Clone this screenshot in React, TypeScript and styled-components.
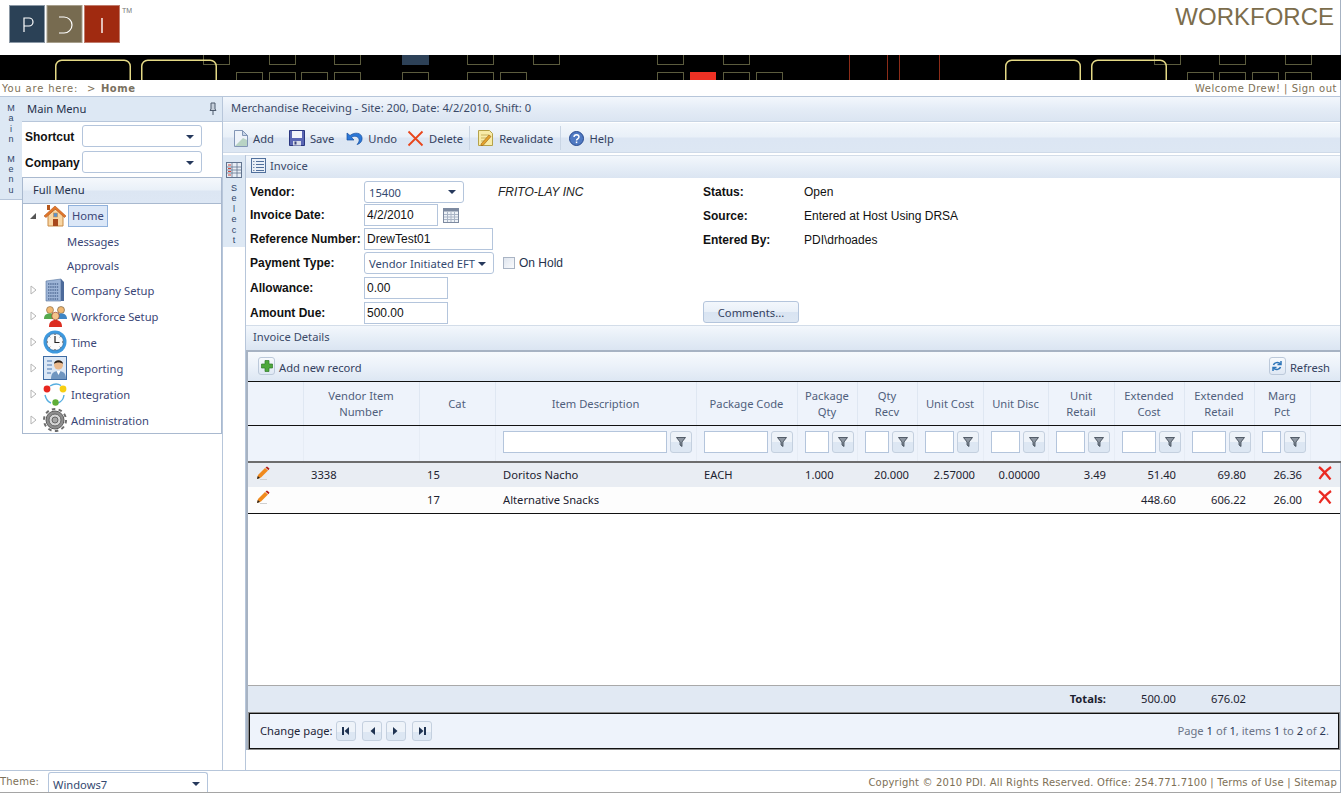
import React from "react";
import styled, { createGlobalStyle } from "styled-components";

const SEGOE = `"Noto Sans", "Liberation Sans", sans-serif`;
const ARIAL = `"Liberation Sans", Arial, sans-serif`;
const VERDANA = `"DejaVu Sans", Verdana, sans-serif`;
const LINE = "#b7c6da";

const GlobalStyle = createGlobalStyle`
  html, body { margin: 0; padding: 0; background: #fff; overflow: hidden; }
  body { font-family: ${SEGOE}; font-size: 11.2px; color: #2c3650; }
  * { box-sizing: border-box; }
`;

const Page = styled.div`
  width: 1341px;
  height: 793px;
  display: flex;
  flex-direction: column;
  border-right: 1px solid #a6b2c2;
  border-bottom: 1px solid #a5a5a5;
`;

/* ---------- header ---------- */
const TopBar = styled.header`
  height: 55px;
  display: flex;
  justify-content: space-between;
  padding: 5px 6px 0 9px;
`;
const LogoWrap = styled.div`
  display: flex;
  align-items: flex-start;
`;
const TradeMark = styled.span`
  font: 7px/10px ${ARIAL};
  color: #777;
  margin: 1px 0 0 2px;
`;
const Brand = styled.div`
  font: 24px/26px ${ARIAL};
  color: #7c6d4c;
  margin-top: -1px;
`;
const BannerSvg = styled.svg`
  display: block;
  flex: none;
`;
const Crumbs = styled.div`
  height: 16px;
  display: flex;
  justify-content: space-between;
  padding: 0 3px 0 2px;
  font: 10px/17px ${VERDANA};
  color: #7d7056;
  letter-spacing: 0.5px;
`;
const CrumbLead = styled.span`
  letter-spacing: 0.8px;
`;
const CrumbArrow = styled.span`
  margin-left: 9px;
`;
const CrumbHome = styled.b`
  color: #7a7160;
  margin-left: 5px;
`;

/* ---------- body columns ---------- */
const Main = styled.div`
  flex: 1;
  min-height: 0;
  display: flex;
  border-top: 1px solid ${LINE};
`;
const SideTab = styled.div`
  width: 22px;
  height: 103px;
  background: #dde8f4;
  padding-top: 6px;
  border-bottom: 1px solid ${LINE};
`;
const Stacked = styled.div`
  display: flex;
  flex-direction: column;
  align-items: center;
  font: 9px/10.4px ${ARIAL};
  color: #2f4468;
`;
const Gap = styled.span`
  height: 9px;
`;
const MenuColumn = styled.aside`
  width: 201px;
  border-right: 1px solid ${LINE};
  display: flex;
  flex-direction: column;
`;
const MenuHead = styled.div`
  height: 25px;
  background: #dde8f4;
  border-bottom: 1px solid ${LINE};
  display: flex;
  align-items: center;
  justify-content: space-between;
  padding: 0 4px 1px 5px;
  color: #26324c;
`;
const PickRow = styled.div<{ $top: number }>`
  display: flex;
  align-items: center;
  height: 22px;
  margin-top: ${(p) => p.$top}px;
`;
const PickLabel = styled.label`
  width: 60px;
  padding: 2px 0 0 3px;
  font: bold 12px ${ARIAL};
  color: #111;
`;
const Combo = styled.div<{ $w: number; $h?: number }>`
  width: ${(p) => p.$w}px;
  height: ${(p) => p.$h ?? 22}px;
  border: 1px solid #b4c5dc;
  border-radius: 3px;
  background: #fff;
  display: flex;
  align-items: center;
  justify-content: space-between;
  padding: 1px 7px 0 4px;
  color: #33496f;
  white-space: nowrap;
`;
const Caret = styled.i`
  width: 0;
  height: 0;
  flex: none;
  border: 4px solid transparent;
  border-top: 4px solid #26395c;
  border-bottom: 0;
`;
const FullMenu = styled.div`
  margin-top: 4px;
  height: 27px;
  border: 1px solid #a9b9cf;
  background: linear-gradient(#f5f8fc, #e9f0f8 48%, #dce6f3 52%, #dde7f4);
  padding-left: 10px;
  line-height: 23px;
  color: #26324c;
`;
const Tree = styled.ul`
  list-style: none;
  margin: 0;
  padding: 0;
  height: 230px;
  border: 1px solid #a9b9cf;
  border-top: 0;
`;
const TreeRow = styled.li<{ $h?: number }>`
  height: ${(p) => p.$h ?? 26}px;
  padding-bottom: 2px;
  display: flex;
  align-items: center;
  color: #3a4676;
`;
const Expander = styled.span`
  width: 20px;
  display: flex;
  justify-content: center;
`;
const TreeIcon = styled.span`
  width: 24px;
  height: 24px;
  margin-right: 4px;
  flex: none;
`;
const Selected = styled.span`
  background: #dbe7f7;
  border: 1px solid #8fb1dc;
  height: 22px;
  padding: 0 3px;
  margin-left: -3px;
  line-height: 19px;
`;
const SubItem = styled.span`
  padding-left: 44px;
`;

const RightPane = styled.main`
  flex: 1;
  min-width: 0;
  display: flex;
  flex-direction: column;
`;
const TitleBar = styled.div`
  height: 25px;
  padding-left: 8px;
  line-height: 22px;
  background: linear-gradient(#f3f7fc, #e4ecf6 50%, #dbe5f2);
  border-bottom: 1px solid #c9d5e4;
  color: #3b4a68;
`;
const Toolbar = styled.div`
  height: 30px;
  margin-top: 1px;
  display: flex;
  align-items: center;
  padding: 1px 0 0 10px;
  background: linear-gradient(#f3f7fc, #e9f0f8 48%, #dce6f3 52%, #dde7f3);
  border-bottom: 1px solid #cfdae8;
`;
const ToolBtn = styled.span<{ $left: number }>`
  display: inline-flex;
  align-items: center;
  gap: 5px;
  margin-left: ${(p) => p.$left}px;
  color: #35425f;
`;
const ToolSep = styled.i<{ $left: number }>`
  width: 1px;
  height: 24px;
  background: #c9d5e4;
  margin-left: ${(p) => p.$left}px;
`;
const Split = styled.div`
  flex: 1;
  min-height: 0;
  display: flex;
  margin-top: 2px;
`;
const SelectCol = styled.div`
  width: 23px;
  flex: none;
  border-right: 1px solid ${LINE};
`;
const SelectTab = styled.div`
  height: 92px;
  background: #dde8f4;
  padding-top: 7px;
  display: flex;
  flex-direction: column;
  align-items: center;
  gap: 5px;
`;
const Content = styled.section`
  flex: 1;
  min-width: 0;
  display: flex;
  flex-direction: column;
  padding-bottom: 20px;
`;
const SectionBar = styled.div<{ $h: number }>`
  height: ${(p) => p.$h}px;
  flex: none;
  display: flex;
  align-items: center;
  gap: 4px;
  padding: 0 0 4px 5px;
  background: linear-gradient(#f3f7fc, #e6eef7 50%, #dbe5f2);
  border-top: 1px solid #d3dde9;
  color: #3b4a68;
`;
const DetailsTitle = styled.span`
  padding-left: 2px;
`;

/* ---------- invoice form ---------- */
const FormArea = styled.div`
  flex: none;
  height: 147px;
  display: flex;
  padding: 2px 0 0 4px;
`;
const FormLeft = styled.div`
  width: 453px;
  display: flex;
  flex-direction: column;
`;
const FormRow = styled.div<{ $h?: number }>`
  height: ${(p) => p.$h ?? 24}px;
  display: flex;
  align-items: center;
`;
const FieldLabel = styled.span`
  width: 114px;
  flex: none;
  font: bold 12px ${ARIAL};
  color: #111;
`;
const TextField = styled.input<{ $w: number }>`
  width: ${(p) => p.$w}px;
  height: 22px;
  border: 1px solid #b4c5dc;
  padding: 0 2px;
  background: #fff;
  font: 12px ${ARIAL};
  color: #111;
  outline: none;
`;
const CalendarWrap = styled.span`
  display: flex;
  margin-left: 5px;
`;
const VendorName = styled.em`
  margin-left: 34px;
  font: italic 12px ${ARIAL};
  color: #222;
`;
const CheckBox = styled.i`
  width: 12px;
  height: 12px;
  margin: 0 4px 0 9px;
  border: 1px solid #a9b4c4;
  background: linear-gradient(135deg, #dfe5ee, #fafbfd);
`;
const CheckText = styled.span`
  font: 12px ${ARIAL};
  color: #26324c;
`;
const FormRight = styled.div`
  display: flex;
  flex-direction: column;
`;
const StatusLabel = styled.span`
  width: 101px;
  font: bold 12px ${ARIAL};
  color: #111;
`;
const StatusValue = styled.span`
  font: 12px ${ARIAL};
  color: #111;
`;
const CommentBtn = styled.button`
  margin-top: 49px;
  width: 96px;
  height: 22px;
  border: 1px solid #b4c5dc;
  border-radius: 3px;
  background: linear-gradient(#f3f7fc, #e9f0f8 48%, #d9e4f2 52%, #dde7f3);
  font: 11.2px ${SEGOE};
  color: #35425f;
  padding: 0;
`;

/* ---------- grid ---------- */
const GridWrap = styled.div`
  flex: 1;
  min-height: 0;
  display: flex;
  flex-direction: column;
  border-top: 2px solid #a7b3c3;
  border-left: 2px solid #a7b3c3;
`;
const GridToolbar = styled.div`
  height: 30px;
  flex: none;
  display: flex;
  align-items: center;
  justify-content: space-between;
  padding: 2px 10px 0 10px;
  background: linear-gradient(#f7fafd, #ebf1f9 50%, #dde7f3);
  border-bottom: 1px solid #111;
  color: #35425f;
`;
const GridAction = styled.span`
  display: inline-flex;
  align-items: center;
  gap: 4px;
`;
const IconBox = styled.span`
  width: 17px;
  height: 18px;
  margin-top: -3px;
  display: inline-flex;
  align-items: center;
  justify-content: center;
  border: 1px solid #bcc9da;
  border-radius: 3px;
  background: linear-gradient(#f7fafd, #dfe8f4);
`;
const Table = styled.table`
  width: 100%;
  flex: none;
  table-layout: fixed;
  border-collapse: collapse;
`;
const Th = styled.th`
  height: 43px;
  padding: 2px 4px 0;
  background: #eef3fb;
  border-right: 1px solid #dfe7f2;
  border-bottom: 1px solid #111;
  font: 400 11.2px/16px ${SEGOE};
  color: #505f7c;
  text-align: center;
`;
const FilterCell = styled.td`
  height: 37px;
  padding: 0 0 2px 7px;
  background: #eef3fb;
  border-right: 1px solid #e6ecf5;
  border-bottom: 2px solid #6d6d6d;
`;
const FilterGroup = styled.div`
  display: flex;
  align-items: center;
  gap: 3px;
`;
const FilterInput = styled.input<{ $w: number }>`
  width: ${(p) => p.$w}px;
  height: 22px;
  flex: none;
  border: 1px solid #b4c5dc;
  background: #fff;
  outline: none;
  padding: 0;
`;
const FilterBtn = styled.span`
  width: 22px;
  height: 22px;
  flex: none;
  display: flex;
  align-items: center;
  justify-content: center;
  border: 1px solid #c4d0df;
  border-radius: 3px;
  background: linear-gradient(#eef3f9, #eef3f9 50%, #dde7f3 52%);
`;
const Tr = styled.tr<{ $alt?: boolean }>`
  background: ${(p) => (p.$alt ? "#fdfdfd" : "#e9edf3")};
`;
const Td = styled.td<{ $right?: boolean; $icon?: boolean; $lift?: boolean }>`
  height: 25px;
  padding: ${(p) => (p.$icon ? "0 0 2px 8px" : p.$lift ? "0 8px 2px" : "0 8px")};
  font: 11.2px ${SEGOE};
  color: #1c2230;
  text-align: ${(p) => (p.$right ? "right" : "left")};
`;
const LastTr = styled(Tr)`
  border-bottom: 1px solid #111;
  td {
    height: 26px;
  }
`;
const Spacer = styled.div`
  flex: 1;
  min-height: 0;
`;
const TotalCell = styled.td<{ $bold?: boolean }>`
  height: 27px;
  padding: 0 8px;
  background: #e1e9f3;
  border-top: 1px solid #a9a9a9;
  font: ${(p) => (p.$bold ? "bold" : "400")} 11.2px ${SEGOE};
  color: #1c2230;
  text-align: right;
`;
const Pager = styled.div`
  height: 38px;
  flex: none;
  display: flex;
  align-items: center;
  justify-content: space-between;
  padding: 0 10px 0 11px;
  background: #eef3fb;
  border: 1px solid #8d8d8d;
  outline: 1px solid #111;
  outline-offset: -2px;
`;
const PagerLeft = styled.div`
  display: flex;
  align-items: center;
  color: #1e2638;
`;
const PagerLabel = styled.span`
  margin-top: -2px;
`;
const PageBtn = styled.span<{ $left: number }>`
  width: 20px;
  height: 20px;
  margin-left: ${(p) => p.$left}px;
  display: flex;
  align-items: center;
  justify-content: center;
  border: 1px solid #c4d0df;
  border-radius: 3px;
  background: linear-gradient(#eef3f9, #eef3f9 55%, #dde7f3 57%);
`;
const PagerInfo = styled.div`
  color: #6b7486;
  padding-bottom: 2px;
`;
const PagerNum = styled.b`
  font-weight: 400;
  color: #2b3857;
`;

/* ---------- footer ---------- */
const Footer = styled.footer`
  height: 22px;
  flex: none;
  display: flex;
  align-items: flex-end;
  justify-content: space-between;
  border-top: 1px solid ${LINE};
  padding-right: 3px;
  font: 10px/19px ${VERDANA};
  letter-spacing: 0.2px;
  color: #7d7056;
`;
const ThemePick = styled.div`
  display: flex;
  align-items: flex-end;
`;
const ThemeLabel = styled.span`
  width: 48px;
  padding-bottom: 1px;
`;
const ThemeCombo = styled(Combo)`
  border-bottom: 0;
  border-radius: 3px 3px 0 0;
  font: 11.2px ${SEGOE};
  letter-spacing: 0;
  color: #33496f;
  padding-top: 3px;
`;

/* ---------- drawings ---------- */
const Logo = () => (
  <svg width="111" height="38" viewBox="0 0 111 38">
    <rect x="0.5" y="0.5" width="35" height="37" fill="#2b4156" stroke="#8b98a5" />
    <rect x="38" y="0.5" width="35" height="37" fill="#776b50" stroke="#a79f8c" />
    <rect x="75.5" y="0.5" width="35" height="37" fill="#a02a10" stroke="#c07b6b" />
    <path d="M15 27V13h5a4 4 0 0 1 0 8h-5" fill="none" stroke="#fff" strokeWidth="1.2" />
    <path d="M50 12h5a8 8 0 0 1 0 16h-5" fill="none" stroke="#fff" strokeWidth="1.2" />
    <path d="M93 13v15" stroke="#fff" strokeWidth="1.4" />
  </svg>
);

const Banner = () => {
  const top = [203, 269, 334, 467, 533, 657, 723, 1154, 1219, 1285];
  const bottom = [236, 269, 301, 334, 402, 467, 500, 657, 723, 756, 1187, 1219, 1252, 1285];
  return (
    <BannerSvg width="1341" height="25" viewBox="0 55 1341 25">
      <rect x="0" y="55" width="1341" height="25" fill="#000" />
      {top.map((x) => (
        <rect key={x} x={x + 0.5} y="50.5" width="26" height="14" fill="none" stroke="#5c5c3e" />
      ))}
      {bottom.map((x) => (
        <rect key={x} x={x + 0.5} y="72.5" width="26" height="14" fill="none" stroke="#5c5c3e" />
      ))}
      <rect x="402" y="50" width="27" height="15" fill="#2d4157" />
      <rect x="690" y="72" width="26" height="10" fill="#ee3124" />
      {[849, 887, 899, 939].map((x) => (
        <rect key={x} x={x} y="55" width="1" height="25" fill="#8c2c18" />
      ))}
      {[55, 141, 1005, 1091].map((x) => (
        <rect key={x} x={x + 0.75} y="60.25" width="74.5" height="30" rx="6" fill="none" stroke="#e4d985" strokeWidth="1.5" />
      ))}
    </BannerSvg>
  );
};

const Pin = () => (
  <svg width="10" height="14" viewBox="0 0 10 14">
    <path d="M3 1h4v6l1 1.5H2L3 7z" fill="#c5cfdb" stroke="#4d5a6c" />
    <path d="M5 9v4" stroke="#4d5a6c" />
  </svg>
);

const OpenArrow = () => (
  <svg width="8" height="8" viewBox="0 0 8 8">
    <path d="M7 1v6H1z" fill="#555" />
  </svg>
);
const ClosedArrow = () => (
  <svg width="7" height="10" viewBox="0 0 7 10">
    <path d="M1 1l5 4-5 4z" fill="#fff" stroke="#b5b5b5" />
  </svg>
);

const HomeIcon = () => (
  <svg width="24" height="24" viewBox="0 0 24 24">
    <path d="M5 11v11h15V11l-7-6z" fill="#f8d6a4" stroke="#c98a45" />
    <path d="M1 12L12 2l11 10-1.500 1.500L12 5 3 13.500z" fill="#e2772a" stroke="#b4561b" strokeWidth=".6" />
    <rect x="4" y="1" width="3" height="5" fill="#b4561b" />
    <rect x="10" y="15" width="5" height="7" fill="#a8481c" />
    <rect x="10.500" y="9" width="4" height="4" fill="#5a93cf" stroke="#c98a45" strokeWidth=".6" />
  </svg>
);
const BuildingIcon = () => (
  <svg width="24" height="24" viewBox="0 0 24 24">
    <path d="M3 3l15-2v22H3z" fill="#9db4d6" stroke="#51709c" strokeWidth=".6" />
    <path d="M18 1l3 3v19h-3z" fill="#4c6a9a" />
    {[6, 9, 12, 15, 18, 21].map((y) => (
      <path key={y} d={`M5 ${y}h11`} stroke="#2f4b78" strokeDasharray="1.400 .8" />
    ))}
  </svg>
);
const PeopleIcon = () => (
  <svg width="24" height="24" viewBox="0 0 24 24">
    <circle cx="7" cy="6" r="3.500" fill="#f0b873" stroke="#6a4a20" strokeWidth=".5" />
    <path d="M1 15c0-4 2-5.500 6-5.500s5 2 5 5.500z" fill="#55a94e" />
    <circle cx="18" cy="6" r="3.500" fill="#f0b873" stroke="#4a3a20" strokeWidth=".5" />
    <path d="M12 15c0-4 2-5.500 6-5.500s6 2 6 5.500z" fill="#3e86c6" />
    <circle cx="12.500" cy="12" r="3.800" fill="#f3c48a" stroke="#8c2b1b" strokeWidth=".6" />
    <path d="M6 23c0-5 2.500-7 6.500-7s6.500 2 6.500 7z" fill="#dc2d20" />
  </svg>
);
const ClockIcon = () => (
  <svg width="24" height="24" viewBox="0 0 24 24">
    <circle cx="12" cy="12" r="11.500" fill="#3e99de" />
    <circle cx="12" cy="12" r="8.500" fill="#fbfbfb" stroke="#1f5d96" strokeWidth=".6" />
    <path d="M12 6v6.500h4.500" fill="none" stroke="#222" strokeWidth="1.200" />
    <path d="M12 4v1M12 19v1M4 12h1M19 12h1M6.500 6.500l.7.7M16.800 16.800l.7.7M17.500 6.500l-.7.7M6.500 17.500l.7-.7" stroke="#333" />
  </svg>
);
const ReportIcon = () => (
  <svg width="24" height="24" viewBox="0 0 24 24">
    <rect x="0.500" y="0.500" width="23" height="23" fill="#dbe7f5" stroke="#3e6ba3" />
    <path d="M4 5h5M4 9h5M4 13h5M4 17h4" stroke="#4a77b0" strokeWidth="1.200" />
    <circle cx="15.500" cy="9" r="4.500" fill="#eab98d" />
    <path d="M11 8c0-5 9-5 9 0-2-2-7-2-9 0z" fill="#2a2018" />
    <path d="M8 23c0-6 3-8 7.500-8s7.500 2 7.500 8z" fill="#7096c0" />
    <path d="M13.500 15l2 4 2-4z" fill="#fff" />
  </svg>
);
const IntegrationIcon = () => (
  <svg width="24" height="24" viewBox="0 0 24 24">
    <path d="M7 4c4-2.500 8-2.500 11-.5M21 13c-.5 4-3 7-6 8M8 21c-3-1-5-4-6-8" fill="none" stroke="#56aee0" strokeWidth="1.400" />
    <circle cx="4" cy="7" r="3.400" fill="#e8261f" />
    <circle cx="20" cy="7" r="3.400" fill="#f7cf12" />
    <circle cx="12.500" cy="20.500" r="3.200" fill="#5fae38" />
  </svg>
);
const GearIcon = () => (
  <svg width="24" height="24" viewBox="0 0 24 24">
    <circle cx="12" cy="12" r="9" fill="#8e8e8e" stroke="#5c5c5c" />
    <circle cx="12" cy="12" r="11" fill="none" stroke="#6c6c6c" strokeWidth="2" strokeDasharray="3.500 3.400" />
    <circle cx="12" cy="12" r="6" fill="#d4d4d4" stroke="#666" />
    <circle cx="12" cy="12" r="3" fill="#a5a5a5" stroke="#666" />
  </svg>
);

const AddIcon = () => (
  <svg width="15" height="17" viewBox="0 0 15 17">
    <path d="M1.500 .5h8l5 5v11h-13z" fill="#eef3fa" stroke="#8296b6" />
    <path d="M9.500 .5v5h5z" fill="#c7d5e8" stroke="#8296b6" />
    <path d="M2 16l8-8 4 2v6z" fill="#b8d3c4" />
  </svg>
);
const SaveIcon = () => (
  <svg width="16" height="16" viewBox="0 0 16 16">
    <path d="M.5.500h15v15H.5z" fill="#5a66b4" stroke="#2b3780" />
    <rect x="3" y="1" width="10" height="7" fill="#f2f4fb" />
    <rect x="4" y="11" width="8" height="4.500" fill="#d8dce8" />
    <rect x="5.500" y="11.500" width="2" height="3" fill="#39437f" />
  </svg>
);
const UndoIcon = () => (
  <svg width="17" height="15" viewBox="0 0 17 15">
    <path d="M1 2v7h7L5.500 6.500C8 4.500 12 5 13 8c.6 2-.5 4-2 5.500 3-.8 5.500-3 5-7C15.500 2 9 .5 4 4.500z" fill="#2b78d8" stroke="#164d9e" strokeWidth=".7" />
  </svg>
);
const DeleteIcon = () => (
  <svg width="17" height="17" viewBox="0 0 17 17">
    <path d="M1.500 1.500l14 14M15.500 1.500l-14 14" stroke="#e8461c" strokeWidth="1.800" />
  </svg>
);
const RevalidateIcon = () => (
  <svg width="17" height="18" viewBox="0 0 17 18">
    <path d="M1.500 1.500h11l3 3v12h-14z" fill="#f8eca8" stroke="#b5a24a" />
    <path d="M4 6h8M4 9h8M4 12h5" stroke="#c9b45e" />
    <path d="M4 15l8-9 2 1.500-8 9H4z" fill="#e3a32b" stroke="#9c5e18" strokeWidth=".6" />
  </svg>
);
const HelpIcon = () => (
  <svg width="15" height="15" viewBox="0 0 15 15">
    <circle cx="7.500" cy="7.500" r="7" fill="#4f79c2" stroke="#27498e" />
    <path d="M5 6c0-3 5-3 5 0 0 1.800-2.500 1.800-2.500 3.500" fill="none" stroke="#fff" strokeWidth="1.400" />
    <rect x="6.800" y="10.500" width="1.500" height="1.600" fill="#fff" />
  </svg>
);
const ListIcon = () => (
  <svg width="15" height="15" viewBox="0 0 15 15">
    <rect x="0.500" y="0.500" width="14" height="14" fill="#eaf0f8" stroke="#51709c" />
    <path d="M5 3.500h8M5 6.500h8M5 9.500h8M5 12.500h8" stroke="#51709c" />
    <path d="M2 3.500h1.500M2 6.500h1.500M2 9.500h1.500M2 12.500h1.500" stroke="#7a8da8" />
  </svg>
);
const SelectIcon = () => (
  <svg width="16" height="16" viewBox="0 0 16 16">
    <rect x="0.500" y="0.500" width="15" height="15" fill="#e8eef6" stroke="#62748f" />
    <path d="M6 1v14M11 1v14M1 5h14M1 8h14M1 11h14" stroke="#62748f" strokeWidth=".8" />
    <path d="M2 3h3M2 6.500h3M2 9.500h3M2 13h3" stroke="#d3463a" />
  </svg>
);
const CalendarIcon = () => (
  <svg width="16" height="15" viewBox="0 0 16 15">
    <rect x="0.500" y="0.500" width="15" height="14" fill="#eef2f7" stroke="#7d8aa0" />
    <rect x="1" y="1" width="14" height="2.500" fill="#7d8aa0" />
    <path d="M4.500 4v10M8 4v10M11.500 4v10M1 6.500h14M1 9h14M1 11.500h14" stroke="#aab5c6" />
  </svg>
);
const PlusIcon = () => (
  <svg width="12" height="12" viewBox="0 0 12 12">
    <path d="M4 .5h4v3.500h3.500v4H8v3.500H4V8H.5V4H4z" fill="#4ea83c" stroke="#2f7a2a" strokeWidth=".7" />
  </svg>
);
const RefreshIcon = () => (
  <svg width="12" height="12" viewBox="0 0 12 12">
    <path d="M10 1v3.500H6.500M2 11V7.500h3.500" fill="none" stroke="#2c74b8" strokeWidth="1.500" />
    <path d="M2.500 5C3 3 7 1 9.500 4M9.500 7C9 9 5 11 2.500 8" fill="none" stroke="#2c74b8" strokeWidth="1.500" />
  </svg>
);
const FunnelIcon = () => (
  <svg width="10" height="10" viewBox="0 0 10 10">
    <path d="M.5.500h9L6 5v4.500L4 8V5z" fill="#8d96a1" stroke="#25303e" strokeWidth=".7" />
  </svg>
);
const PencilIcon = () => (
  <svg width="14" height="14" viewBox="0 0 14 14">
    <path d="M1 13l1-4 7-7 3 2.500-7 7z" fill="#f08a1d" />
    <path d="M9.500 1.500l1.500-1 2.500 2-1 1.800z" fill="#b4201b" />
    <path d="M1 13l.8-3 2.200 2z" fill="#222" />
    <path d="M4 13.500h7" stroke="#d0d0d0" />
  </svg>
);
const RemoveIcon = () => (
  <svg width="14" height="14" viewBox="0 0 14 14">
    <path d="M1 1c4 3 8 8 11.500 12.500M13 1C9 4 4 9 1.500 13" fill="none" stroke="#ea2a22" strokeWidth="2.200" />
  </svg>
);
const PageIcon = ({ dir, end }: { dir: "l" | "r"; end?: boolean }) => (
  <svg width="10" height="10" viewBox="0 0 10 10">
    {dir === "l" ? <path d="M8 1v8L3.500 5z" fill="#1f3352" /> : <path d="M2 1v8l4.500-4z" fill="#1f3352" />}
    {end && <rect x={dir === "l" ? 1 : 7} y="1" width="2" height="8" fill="#1f3352" />}
  </svg>
);

/* ---------- data ---------- */
const menuItems: { name: string; icon: React.ReactNode }[] = [
  { name: "Company Setup", icon: <BuildingIcon /> },
  { name: "Workforce Setup", icon: <PeopleIcon /> },
  { name: "Time", icon: <ClockIcon /> },
  { name: "Reporting", icon: <ReportIcon /> },
  { name: "Integration", icon: <IntegrationIcon /> },
  { name: "Administration", icon: <GearIcon /> },
];

const columns: { w: number; head: React.ReactNode; filter?: number }[] = [
  { w: 55, head: "" },
  { w: 116, head: <>Vendor Item<br />Number</> },
  { w: 76, head: "Cat" },
  { w: 201, head: "Item Description", filter: 164 },
  { w: 101, head: "Package Code", filter: 64 },
  { w: 60, head: <>Package<br />Qty</>, filter: 24 },
  { w: 60, head: <>Qty<br />Recv</>, filter: 24 },
  { w: 66, head: "Unit Cost", filter: 29 },
  { w: 65, head: "Unit Disc", filter: 29 },
  { w: 66, head: <>Unit<br />Retail</>, filter: 29 },
  { w: 70, head: <>Extended<br />Cost</>, filter: 34 },
  { w: 70, head: <>Extended<br />Retail</>, filter: 34 },
  { w: 56, head: <>Marg<br />Pct</>, filter: 19 },
  { w: 30, head: "" },
];

const rows = [
  ["3338", "15", "Doritos Nacho", "EACH", "1.000", "20.000", "2.57000", "0.00000", "3.49", "51.40", "69.80", "26.36"],
  ["", "17", "Alternative Snacks", "", "", "", "", "", "", "448.60", "606.22", "26.00"],
];

const Cols = () => (
  <colgroup>
    {columns.map((c, i) => (
      <col key={i} width={c.w} />
    ))}
  </colgroup>
);

const stack = (text: string) =>
  text.split("").map((ch, i) => (ch === " " ? <Gap key={i} /> : <span key={i}>{ch}</span>));

export default function App() {
  return (
    <Page>
      <GlobalStyle />
      <TopBar>
        <LogoWrap>
          <Logo />
          <TradeMark>TM</TradeMark>
        </LogoWrap>
        <Brand>WORKFORCE</Brand>
      </TopBar>
      <Banner />
      <Crumbs>
        <span>
          <CrumbLead>You are here:</CrumbLead>
          <CrumbArrow>&gt;</CrumbArrow>
          <CrumbHome>Home</CrumbHome>
        </span>
        <span>Welcome Drew! | Sign out</span>
      </Crumbs>

      <Main>
        <SideTab>
          <Stacked>{stack("Main Menu")}</Stacked>
        </SideTab>
        <MenuColumn>
          <MenuHead>
            Main Menu
            <Pin />
          </MenuHead>
          <PickRow $top={3}>
            <PickLabel>Shortcut</PickLabel>
            <Combo $w={120}>
              <span />
              <Caret />
            </Combo>
          </PickRow>
          <PickRow $top={4}>
            <PickLabel>Company</PickLabel>
            <Combo $w={120}>
              <span />
              <Caret />
            </Combo>
          </PickRow>
          <FullMenu>Full Menu</FullMenu>
          <Tree>
            <TreeRow>
              <Expander><OpenArrow /></Expander>
              <TreeIcon><HomeIcon /></TreeIcon>
              <Selected>Home</Selected>
            </TreeRow>
            <TreeRow $h={24}><SubItem>Messages</SubItem></TreeRow>
            <TreeRow $h={24}><SubItem>Approvals</SubItem></TreeRow>
            {menuItems.map((m) => (
              <TreeRow key={m.name}>
                <Expander><ClosedArrow /></Expander>
                <TreeIcon>{m.icon}</TreeIcon>
                {m.name}
              </TreeRow>
            ))}
          </Tree>
        </MenuColumn>

        <RightPane>
          <TitleBar>Merchandise Receiving - Site: 200, Date: 4/2/2010, Shift: 0</TitleBar>
          <Toolbar>
            <ToolBtn $left={0}><AddIcon />Add</ToolBtn>
            <ToolBtn $left={15}><SaveIcon />Save</ToolBtn>
            <ToolBtn $left={12}><UndoIcon />Undo</ToolBtn>
            <ToolBtn $left={10}><DeleteIcon />Delete</ToolBtn>
            <ToolSep $left={6} />
            <ToolBtn $left={7}><RevalidateIcon />Revalidate</ToolBtn>
            <ToolSep $left={7} />
            <ToolBtn $left={8}><HelpIcon />Help</ToolBtn>
          </Toolbar>
          <Split>
            <SelectCol>
              <SelectTab>
                <SelectIcon />
                <Stacked>{stack("Select")}</Stacked>
              </SelectTab>
            </SelectCol>
            <Content>
              <SectionBar $h={23}>
                <ListIcon />
                Invoice
              </SectionBar>
              <FormArea>
                <FormLeft>
                  <FormRow $h={23}>
                    <FieldLabel>Vendor:</FieldLabel>
                    <Combo $w={100}>15400<Caret /></Combo>
                    <VendorName>FRITO-LAY INC</VendorName>
                  </FormRow>
                  <FormRow>
                    <FieldLabel>Invoice Date:</FieldLabel>
                    <TextField $w={74} defaultValue="4/2/2010" />
                    <CalendarWrap><CalendarIcon /></CalendarWrap>
                  </FormRow>
                  <FormRow>
                    <FieldLabel>Reference Number:</FieldLabel>
                    <TextField $w={129} defaultValue="DrewTest01" />
                  </FormRow>
                  <FormRow>
                    <FieldLabel>Payment Type:</FieldLabel>
                    <Combo $w={130}>Vendor Initiated EFT<Caret /></Combo>
                    <CheckBox />
                    <CheckText>On Hold</CheckText>
                  </FormRow>
                  <FormRow $h={25}>
                    <FieldLabel>Allowance:</FieldLabel>
                    <TextField $w={84} defaultValue="0.00" />
                  </FormRow>
                  <FormRow $h={25}>
                    <FieldLabel>Amount Due:</FieldLabel>
                    <TextField $w={84} defaultValue="500.00" />
                  </FormRow>
                </FormLeft>
                <FormRight>
                  <FormRow>
                    <StatusLabel>Status:</StatusLabel>
                    <StatusValue>Open</StatusValue>
                  </FormRow>
                  <FormRow>
                    <StatusLabel>Source:</StatusLabel>
                    <StatusValue>Entered at Host Using DRSA</StatusValue>
                  </FormRow>
                  <FormRow>
                    <StatusLabel>Entered By:</StatusLabel>
                    <StatusValue>PDI\drhoades</StatusValue>
                  </FormRow>
                  <CommentBtn>Comments...</CommentBtn>
                </FormRight>
              </FormArea>
              <SectionBar $h={25}>
                <DetailsTitle>Invoice Details</DetailsTitle>
              </SectionBar>
              <GridWrap>
                <GridToolbar>
                  <GridAction>
                    <IconBox><PlusIcon /></IconBox>
                    Add new record
                  </GridAction>
                  <GridAction>
                    <IconBox><RefreshIcon /></IconBox>
                    Refresh
                  </GridAction>
                </GridToolbar>
                <Table>
                  <Cols />
                  <thead>
                    <tr>
                      {columns.map((c, i) => (
                        <Th key={i}>{c.head}</Th>
                      ))}
                    </tr>
                    <tr>
                      {columns.map((c, i) => (
                        <FilterCell key={i}>
                          {c.filter && (
                            <FilterGroup>
                              <FilterInput $w={c.filter} />
                              <FilterBtn><FunnelIcon /></FilterBtn>
                            </FilterGroup>
                          )}
                        </FilterCell>
                      ))}
                    </tr>
                  </thead>
                  <tbody>
                    {rows.map((r, ri) => {
                      const RowTag = ri === rows.length - 1 ? LastTr : Tr;
                      return (
                        <RowTag key={ri} $alt={ri === 1}>
                          <Td $icon><PencilIcon /></Td>
                          {r.map((v, i) => (
                            <Td key={i} $right={i >= 5} $lift={ri === 0}>{v}</Td>
                          ))}
                          <Td $icon><RemoveIcon /></Td>
                        </RowTag>
                      );
                    })}
                  </tbody>
                </Table>
                <Spacer />
                <Table>
                  <Cols />
                  <tbody>
                    <tr>
                      {columns.map((_, i) => (
                        <TotalCell key={i} $bold={i === 9}>
                          {i === 9 ? "Totals:" : i === 10 ? "500.00" : i === 11 ? "676.02" : ""}
                        </TotalCell>
                      ))}
                    </tr>
                  </tbody>
                </Table>
                <Pager>
                  <PagerLeft>
                    <PagerLabel>Change page:</PagerLabel>
                    <PageBtn $left={3}><PageIcon dir="l" end /></PageBtn>
                    <PageBtn $left={6}><PageIcon dir="l" /></PageBtn>
                    <PageBtn $left={4}><PageIcon dir="r" /></PageBtn>
                    <PageBtn $left={6}><PageIcon dir="r" end /></PageBtn>
                  </PagerLeft>
                  <PagerInfo>
                    Page <PagerNum>1</PagerNum> of <PagerNum>1</PagerNum>, items <PagerNum>1</PagerNum> to{" "}
                    <PagerNum>2</PagerNum> of <PagerNum>2</PagerNum>.
                  </PagerInfo>
                </Pager>
              </GridWrap>
            </Content>
          </Split>
        </RightPane>
      </Main>

      <Footer>
        <ThemePick>
          <ThemeLabel>Theme:</ThemeLabel>
          <ThemeCombo $w={160} $h={20}>Windows7<Caret /></ThemeCombo>
        </ThemePick>
        <span>Copyright © 2010 PDI. All Rights Reserved. Office: 254.771.7100 | Terms of Use | Sitemap</span>
      </Footer>
    </Page>
  );
}
